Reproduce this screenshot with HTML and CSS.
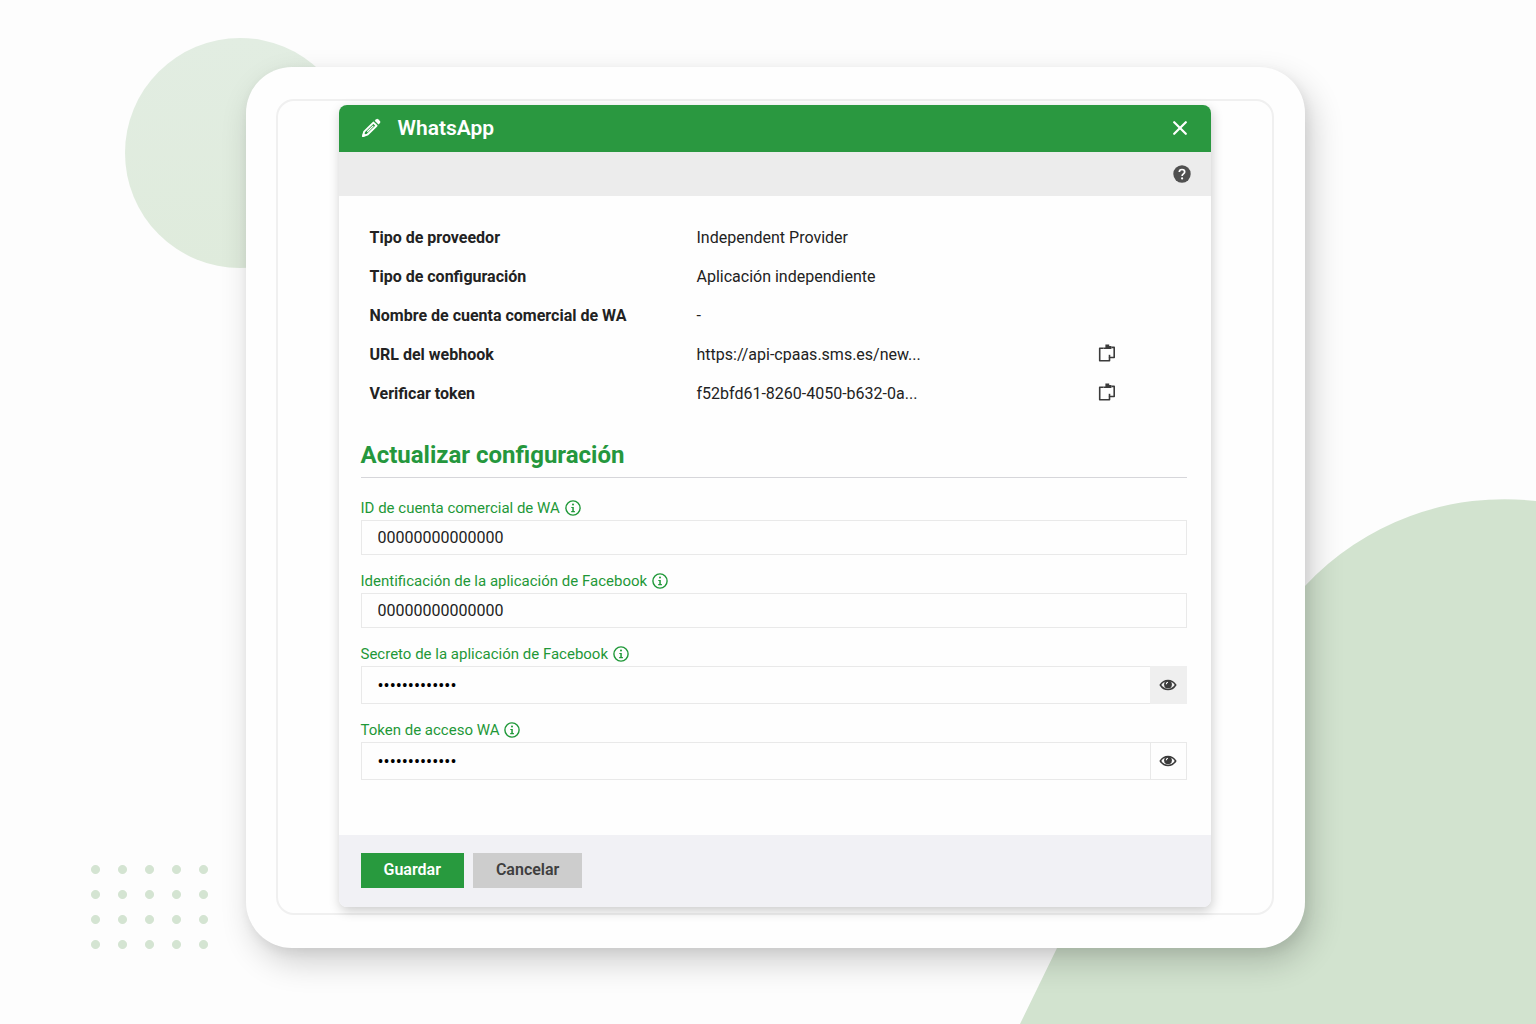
FILE: index.html
```html
<!DOCTYPE html>
<html lang="es">
<head>
<meta charset="utf-8">
<meta name="viewport" content="width=device-width, initial-scale=1">
<title>WhatsApp</title>
<link rel="stylesheet" href="styles.css">
</head>
<body>
<svg width="0" height="0" class="sprite" aria-hidden="true">
  <symbol id="info" viewBox="0 0 16 16">
    <circle cx="8" cy="8" r="7.1" fill="none" stroke="currentColor" stroke-width="1.4"/>
    <circle cx="8" cy="4.6" r="1" fill="currentColor"/>
    <path d="M6.3 6.9h2.5v4.2h1.1v1.1H6.2v-1.1h1.1V8h-1z" fill="currentColor"/>
  </symbol>
  <symbol id="copy" viewBox="0 0 18 18">
    <path d="M5.500 4.200H1.700v12.600h9.800v-3.300h4.700V3.400h-2.800" fill="none" stroke="currentColor" stroke-width="1.600" stroke-linejoin="round"/>
    <path d="M11.500 13.500v-2.700" stroke="currentColor" stroke-width="1.600"/>
    <path d="M7.400.6h3.800v1.500h2.200v2.900H5.500V3.600h1.900z" fill="currentColor"/>
  </symbol>
  <symbol id="eye" viewBox="0 0 18 12">
    <path d="M1.300 6C3.200 3 5.800 1.500 9 1.500S14.800 3 16.700 6c-1.900 3-4.500 4.500-7.700 4.500S3.200 9 1.300 6z" fill="none" stroke="currentColor" stroke-width="1.500"/>
    <circle cx="9" cy="5.400" r="3.900" fill="currentColor"/>
    <path d="M7.300 5.200a1.900 1.900 0 0 1 1.700-1.900" fill="none" stroke="#fff" stroke-width="1.100"/>
  </symbol>
</svg>

<div class="backdrop" aria-hidden="true">
  <div class="disc"></div>
  <div class="dots"></div>
  <svg class="hill" viewBox="0 0 536 525">
    <path d="M20 525 57 449 200 160 305 87A273 273 0 0 1 536 2V525z" fill="#d2e3cf"/>
  </svg>
</div>

<main class="stage">
  <div class="tablet">
    <div class="screen">
      <section class="dialog" role="dialog" aria-labelledby="title">
        <header class="titlebar">
          <svg class="pencil" viewBox="0 0 20 20" aria-hidden="true">
            <path d="M2 18 3.200 13.600 12.400 4.600 15.600 7.700 6.300 16.700z" fill="none" stroke="#fff" stroke-width="1.900" stroke-linejoin="round"/>
            <path d="M6.300 13.700 12.300 7.900" stroke="#fff" stroke-width="1.200"/>
            <path d="M1 19 2.200 14.600 5.500 17.800z" fill="#fff"/>
            <path d="M13.700 2.700 15.300 1.200Q16.200.4 17.100 1.200L19 3.100Q19.700 4 19 4.900L17.500 6.400z" fill="#fff"/>
          </svg>
          <h1 id="title">WhatsApp</h1>
          <button type="button" class="icon-button close" aria-label="Cerrar">
            <svg viewBox="0 0 14 14"><path d="M1.200 1.200 12.800 12.800M12.800 1.200 1.200 12.800" stroke="currentColor" stroke-width="2.200" stroke-linecap="round"/></svg>
          </button>
        </header>
        <div class="toolbar">
          <button type="button" class="icon-button help" aria-label="Ayuda">
            <svg viewBox="0 0 18 18"><circle cx="9" cy="9" r="8.700" fill="currentColor"/><path d="M6.300 7.100C6.300 5.500 7.400 4.500 9 4.500s2.700.9 2.700 2.400c0 1.900-2.600 2-2.600 4" fill="none" stroke="#fff" stroke-width="1.700"/><circle cx="9.100" cy="13.400" r="1.100" fill="#fff"/></svg>
          </button>
        </div>
        <form class="content" id="config">
          <table class="details">
            <tr><th scope="row">Tipo de proveedor</th><td>Independent Provider</td><td></td></tr>
            <tr><th scope="row">Tipo de configuración</th><td>Aplicación independiente</td><td></td></tr>
            <tr><th scope="row">Nombre de cuenta comercial de WA</th><td>-</td><td></td></tr>
            <tr><th scope="row">URL del webhook</th><td>https://api-cpaas.sms.es/new...</td><td><button type="button" class="icon-button copy" aria-label="Copiar URL"><svg><use href="#copy"/></svg></button></td></tr>
            <tr><th scope="row">Verificar token</th><td>f52bfd61-8260-4050-b632-0a...</td><td><button type="button" class="icon-button copy" aria-label="Copiar token"><svg><use href="#copy"/></svg></button></td></tr>
          </table>
          <h2>Actualizar configuración</h2>
          <div class="field">
            <label for="account">ID de cuenta comercial de WA <svg class="info"><use href="#info"/></svg></label>
            <input id="account" type="text" value="00000000000000">
          </div>
          <div class="field">
            <label for="app">Identificación de la aplicación de Facebook <svg class="info"><use href="#info"/></svg></label>
            <input id="app" type="text" value="00000000000000">
          </div>
          <div class="field">
            <label for="secret">Secreto de la aplicación de Facebook <svg class="info"><use href="#info"/></svg></label>
            <div class="secret">
              <input id="secret" type="password" value="0000000000000">
              <button type="button" class="reveal active" aria-label="Mostrar secreto"><svg><use href="#eye"/></svg></button>
            </div>
          </div>
          <div class="field">
            <label for="token">Token de acceso WA <svg class="info"><use href="#info"/></svg></label>
            <div class="secret">
              <input id="token" type="password" value="0000000000000">
              <button type="button" class="reveal" aria-label="Mostrar token"><svg><use href="#eye"/></svg></button>
            </div>
          </div>
        </form>
        <footer class="actions">
          <button type="submit" form="config" class="button primary">Guardar</button>
          <button type="button" class="button">Cancelar</button>
        </footer>
      </section>
    </div>
  </div>
</main>
</body>
</html>
```

FILE: styles.css
```css
* {
  box-sizing: border-box;
}

body {
  margin: 0;
  background: #fdfdfd;
  color: #222;
  font: 16px/24px Roboto, "Liberation Sans", sans-serif;
}

button,
input {
  font: inherit;
  color: inherit;
}

h1,
h2 {
  margin: 0;
}

svg {
  display: block;
}

.sprite {
  position: absolute;
}

/* Decorative shapes behind the tablet */
.backdrop {
  position: absolute;
  inset: 0;
  overflow: hidden;
  z-index: -1;
}

.disc {
  position: absolute;
  left: 125px;
  top: 38px;
  width: 230px;
  height: 230px;
  border-radius: 50%;
  background: linear-gradient(#e2ede2, #dfebdc);
}

.dots {
  position: absolute;
  left: 82px;
  bottom: 65px;
  width: 135px;
  height: 102px;
  background: radial-gradient(circle, #d4e4d2 4px, transparent 5px) 0 0 / 27px 25px;
}

.hill {
  position: absolute;
  right: 0;
  bottom: 0;
  width: 536px;
  height: 525px;
}

/* Tablet frame */
.stage {
  display: flex;
  align-items: center;
  justify-content: center;
  min-height: 100vh;
  padding: 24px 16px 33px 30px;
}

.tablet {
  width: 100%;
  max-width: 1059px;
  padding: 32px 31px 33px 30px;
  border-radius: 46px;
  background: #fefefe;
  box-shadow: 7px 14px 32px rgba(0, 0, 0, .19), 2px 4px 12px rgba(0, 0, 0, .06);
}

.screen {
  padding: 4px 61px 6px;
  border: 2px solid #f0f0f0;
  border-radius: 18px;
}

/* Dialog */
.dialog {
  border-radius: 8px;
  background: #fefefe;
  box-shadow: 1px 4px 12px rgba(0, 0, 0, .2);
}

.titlebar {
  display: flex;
  align-items: center;
  height: 47px;
  padding: 0 22px 2px;
  border-radius: 8px 8px 0 0;
  background: #2a9840;
  color: #fff;
}

.pencil {
  width: 20px;
  height: 20px;
}

.titlebar h1 {
  margin-left: 17px;
  font-size: 21px;
  font-weight: 600;
}

.icon-button {
  display: block;
  padding: 0;
  border: 0;
  background: none;
  cursor: pointer;
}

.close {
  margin-left: auto;
  padding: 2px;
}

.close svg {
  width: 14px;
  height: 14px;
}

.toolbar {
  display: flex;
  align-items: center;
  justify-content: flex-end;
  height: 44px;
  padding: 0 20px;
  background: #ececec;
}

.help {
  color: #505050;
}

.help svg {
  width: 18px;
  height: 18px;
}

.content {
  padding: 22px 24px 55px 22px;
}

.details {
  width: 100%;
  margin-bottom: 26px;
  border-collapse: collapse;
  table-layout: fixed;
}

.details th,
.details td {
  height: 39px;
  padding: 0;
  text-align: left;
}

.details th {
  width: 336px;
  padding-left: 9px;
  font-weight: 700;
}

.details td:last-child {
  width: 89px;
}

.copy {
  padding-bottom: 3px;
  color: #3b3b3b;
}

.copy svg {
  width: 18px;
  height: 18px;
}

h2 {
  margin-bottom: 18px;
  padding-bottom: 6px;
  border-bottom: 1px solid #d6d6da;
  color: #25973d;
  font-size: 24px;
  font-weight: 700;
  line-height: 32px;
}

.field + .field {
  margin-top: 14px;
}

.field label {
  display: flex;
  align-items: center;
  gap: 5px;
  color: #1f9838;
  font-size: 15px;
}

.info {
  width: 16px;
  height: 16px;
}

.field input {
  display: block;
  width: 100%;
  height: 35px;
  padding: 0 16px;
  border: 1px solid #e9e9e9;
  border-radius: 0;
  background: #fefefe;
}

.secret {
  display: flex;
}

.secret input {
  flex: 1;
  height: 38px;
  border-right: 0;
  color: #000;
  font-size: 18px;
}

.reveal {
  display: flex;
  align-items: center;
  justify-content: center;
  width: 37px;
  padding: 0;
  border: 1px solid #e9e9e9;
  background: #fefefe;
  color: #3b3b3b;
}

.reveal.active {
  border-color: #efefef;
  background: #efefef;
}

.reveal svg {
  width: 18px;
  height: 12px;
}

.actions {
  display: flex;
  align-items: center;
  gap: 9px;
  height: 72px;
  padding: 0 22px 2px;
  border-radius: 0 0 8px 8px;
  background: #f1f1f5;
}

.button {
  height: 35px;
  padding: 0 23px;
  border: 0;
  background: #cdcdcd;
  color: #3f3f3f;
  font-weight: 600;
}

.button.primary {
  background: #289a3e;
  color: #fff;
}
```
